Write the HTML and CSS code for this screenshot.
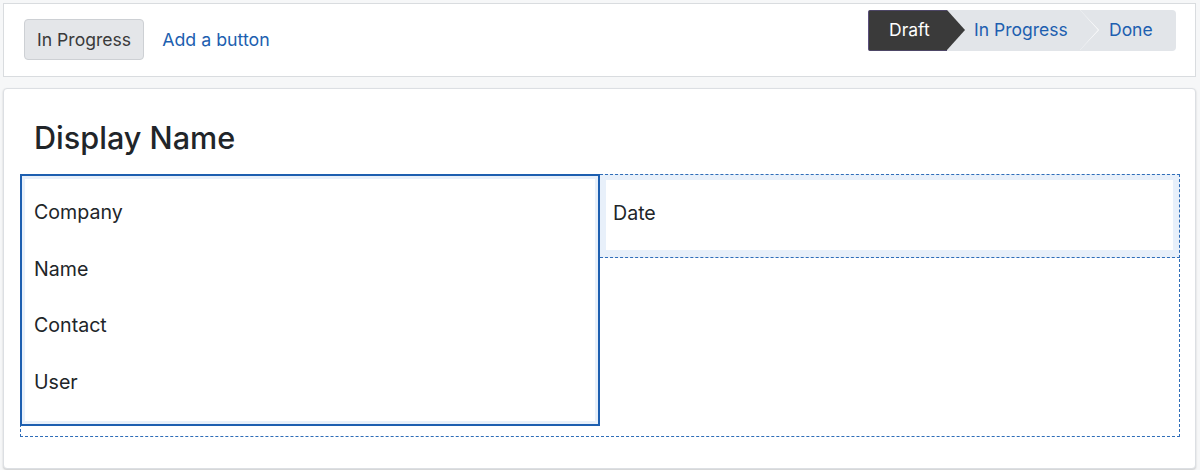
FILE: index.html
```html
<!DOCTYPE html>
<html lang="en">
<head>
<meta charset="utf-8">
<title>Form</title>
<link rel="stylesheet" href="styles.css">
</head>
<body>
<div class="page">
  <header class="topbar">
    <div class="actions">
      <button class="btn">In Progress</button>
      <a class="link" href="#">Add a button</a>
    </div>
    <div class="statusbar">
      <span class="stage stage-active">Draft</span>
      <span class="stage stage-mid">In Progress</span>
      <span class="stage stage-last">Done</span>
    </div>
  </header>
  <main class="card">
    <h1 class="title">Display Name</h1>
    <div class="group">
      <div class="col col-left">
        <div class="row">Company</div>
        <div class="row">Name</div>
        <div class="row">Contact</div>
        <div class="row">User</div>
      </div>
      <div class="col col-right">
        <div class="cell"><div class="cell-inner">Date</div></div>
      </div>
    </div>
  </main>
</div>
</body>
</html>
```
FILE: styles.css
```css
* { box-sizing: border-box; }
html, body { margin: 0; padding: 0; }
body {
  background: #f6f7f8;
  font-family: Inter, Roboto, "Noto Sans", "Liberation Sans", sans-serif;
  color: #212529;
  width: 1200px;
  height: 470px;
  overflow: hidden;
}
.page {
  padding: 3px 4px 0 3px;
  display: flex;
  flex-direction: column;
  gap: 11px;
}
.topbar {
  height: 74px;
  background: #fff;
  border: 1px solid #d9dcdf;
  display: flex;
  justify-content: space-between;
  align-items: flex-start;
  padding: 0 19px 0 20px;
}
.actions {
  display: flex;
  align-items: center;
  gap: 18px;
  margin-top: 15px;
}
.btn {
  height: 41px;
  padding: 0 12px;
  background: #e4e6e9;
  border: 1px solid #cdd0d4;
  border-radius: 4px;
  font-family: inherit;
  font-size: 17.6px;
  color: #3a3a3a;
}
.link {
  color: #1d5fb0;
  text-decoration: none;
  font-size: 17.8px;
}
.statusbar {
  margin-top: 6px;
  height: 41px;
  display: flex;
  background: #e2e5e9;
  border-radius: 4px;
  font-size: 17.5px;
}
.stage {
  position: relative;
  display: flex;
  align-items: center;
  height: 41px;
  padding-bottom: 3px;
  color: #1d5fb0;
}
.stage-active {
  width: 79px;
  padding-left: 20px;
  background: #3a3a3a;
  color: #fff;
  border-left: 1px solid #5b4f7c;
  border-top: 1px solid #4d4666;
  border-bottom: 1px solid #4d4666;
  border-radius: 2px 0 0 2px;
}
.stage-active::after {
  content: "";
  position: absolute;
  right: -18px;
  top: -1px;
  border-left: 18px solid #3a3a3a;
  border-top: 20.5px solid transparent;
  border-bottom: 20.5px solid transparent;
}
.stage-mid {
  width: 133px;
  padding-left: 27px;
}
.stage-mid::before {
  content: "";
  position: absolute;
  right: -19px;
  top: 0;
  border-left: 19px solid #ffffff;
  border-top: 20.5px solid transparent;
  border-bottom: 20.5px solid transparent;
  z-index: 1;
}
.stage-mid::after {
  content: "";
  position: absolute;
  right: -17.5px;
  top: 0;
  border-left: 18px solid #e2e5e9;
  border-top: 20.5px solid transparent;
  border-bottom: 20.5px solid transparent;
  z-index: 2;
}
.stage-last {
  width: 96px;
  padding-left: 29px;
}
.card {
  height: 381px;
  background: #fff;
  border: 1px solid #dcdfe3;
  border-radius: 4px;
  box-shadow: 0 1px 2px rgba(0, 0, 0, 0.18);
  padding: 30px 15px 0 16px;
}
.title {
  margin: 0 0 18px 14px;
  font-size: 30.6px;
  line-height: 37px;
  font-weight: 500;
  color: #212529;
}
.group {
  border: 1px dashed #2f6db8;
  display: grid;
  grid-template-columns: 1fr 1fr;
  padding-bottom: 10px;
}
.col {
  margin-top: -1px;
}
.col-left {
  margin-left: -1px;
  border: 2px solid #1d5fb0;
  box-shadow: inset 0 0 0 3px #e8f0fa;
  padding: 8px 0 14px 12px;
  font-size: 19.6px;
}
.row {
  height: 56.5px;
  display: flex;
  align-items: center;
}
.col-right {
  margin-right: -1px;
}
.cell {
  border-top: 1px dashed #2f6db8;
  border-bottom: 1px dashed #2f6db8;
  border-right: 1px dashed #2f6db8;
  background: #e8f0fa;
  padding: 5px 6px 7px 6px;
  height: 84px;
}
.cell-inner {
  background: #fff;
  height: 100%;
  display: flex;
  align-items: center;
  padding-left: 7px;
  padding-bottom: 4px;
  font-size: 19.6px;
}
```
